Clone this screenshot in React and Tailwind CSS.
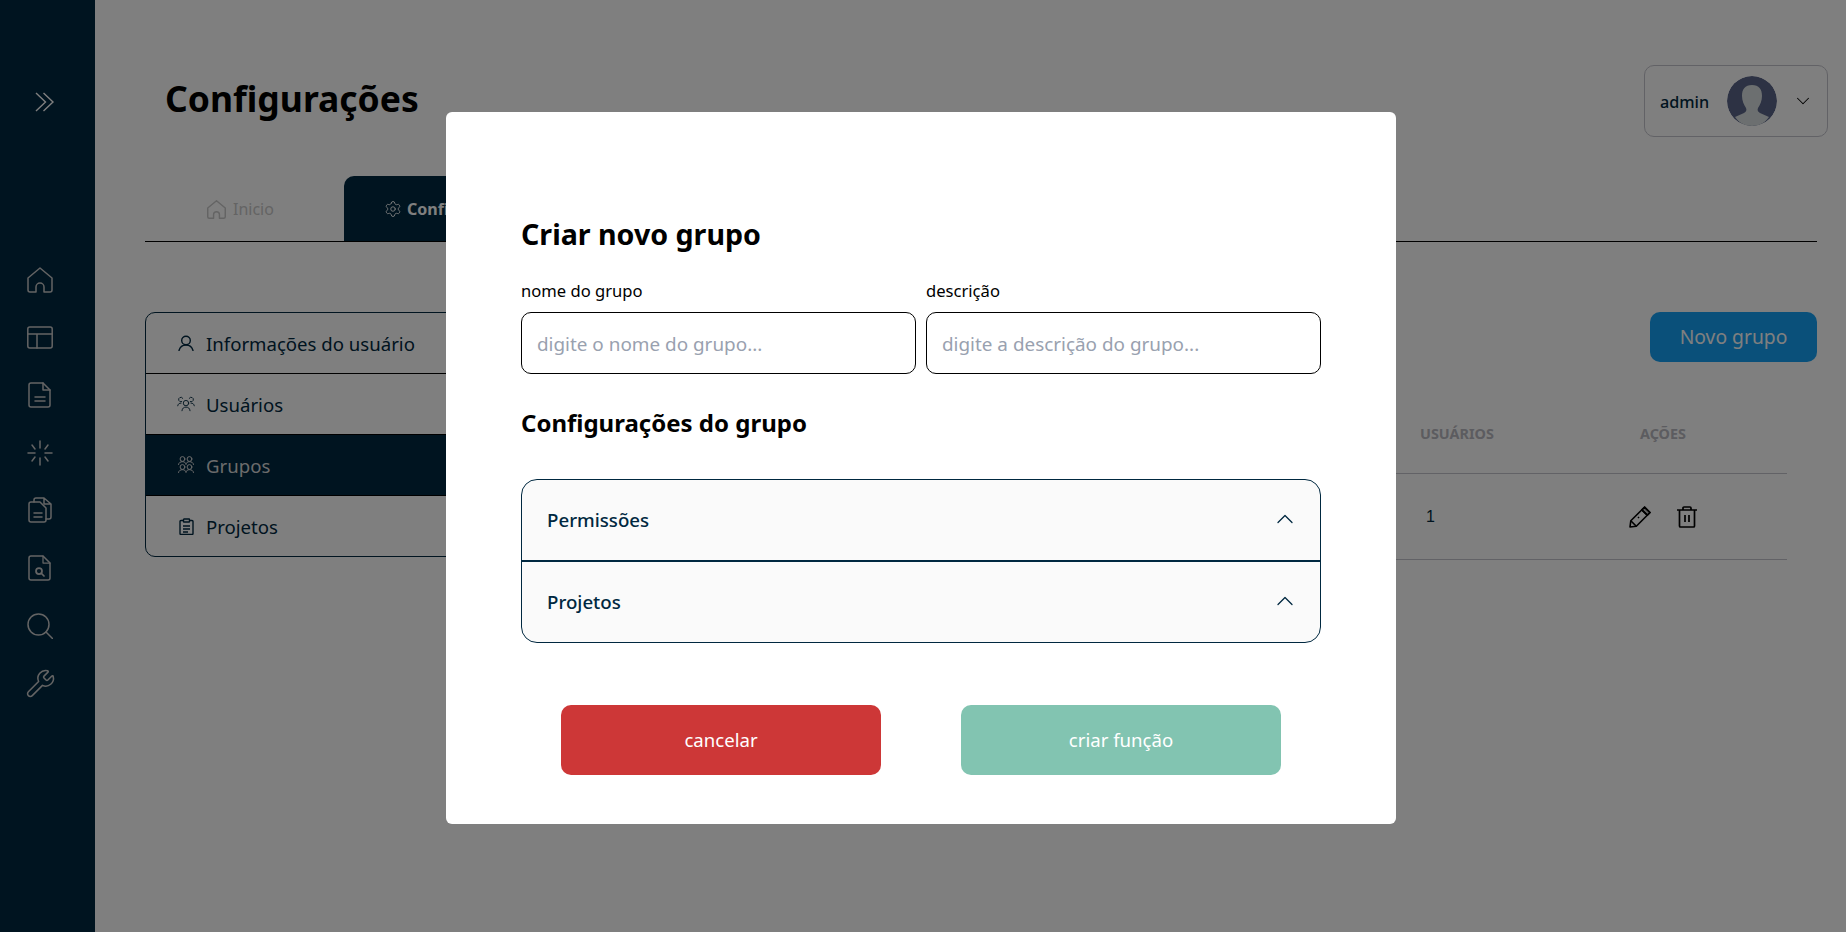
import React from "react";
import { ChevronDown, ChevronUp, Settings, Wrench } from "lucide-react";

const FONT = "font-['Noto_Sans','Open_Sans',sans-serif]";

const SideSvg = ({ children }) => (
  <svg width="26" height="26" viewBox="0 0 26 26" fill="none" stroke="currentColor" strokeWidth="1.5" strokeLinecap="round" strokeLinejoin="round">
    {children}
  </svg>
);

const HomePath = () => (
  <path d="M9 25H3a2 2 0 0 1-2-2V11L13 1l12 10v12a2 2 0 0 1-2 2h-6v-5a4 4 0 0 0-8 0z" />
);

const sideIcons = [
  <SideSvg key="home"><HomePath /></SideSvg>,
  <SideSvg key="layout">
    <rect x="0.8" y="2" width="24.4" height="21" rx="2" />
    <path d="M1 9h24M10 9v14" />
  </SideSvg>,
  <SideSvg key="file">
    <path d="M4 1h12l7 7v15a2 2 0 0 1-2 2H4a2 2 0 0 1-2-2V3a2 2 0 0 1 2-2z" />
    <path d="M16 1v7h7M8 15h10M8 19h10" />
  </SideSvg>,
  <SideSvg key="loader">
    <path d="M13 1v7M13 18v7M1 13h7M18 13h7M5 5l3 4M21 5l-3 4M5 21l3-4M21 21l-3-4" />
  </SideSvg>,
  <SideSvg key="files">
    <path d="M4 5h9l6 6v12a2 2 0 0 1-2 2H4a2 2 0 0 1-2-2V7a2 2 0 0 1 2-2z" />
    <path d="M7 5V3a2 2 0 0 1 2-2h8l7 6v13a2 2 0 0 1-2 2h-3M7 16h8M7 20h8M17 1v6h7" />
  </SideSvg>,
  <SideSvg key="file-search">
    <path d="M4 1h12l7 7v15a2 2 0 0 1-2 2H4a2 2 0 0 1-2-2V3a2 2 0 0 1 2-2z" />
    <path d="M16 1v7h7" strokeWidth="1.25" />
    <circle cx="12" cy="16" r="3" strokeWidth="1.75" />
    <path d="M14.500 18.500L17 21" strokeWidth="1.75" />
  </SideSvg>,
  <SideSvg key="search">
    <circle cx="11.500" cy="11.500" r="10.500" />
    <path d="M19 19l6.500 6.500" />
  </SideSvg>,
  <Wrench key="wrench" size={31} strokeWidth={1.2} className="-m-[2.500px]" />,
];

const UserIcon = () => (
  <svg width="16" height="16" viewBox="0 0 16 16" fill="none" stroke="currentColor" strokeWidth="1.4" strokeLinecap="round">
    <circle cx="8" cy="5.500" r="4.300" />
    <path d="M1 15.500c.8-3 3.500-5.500 7-5.500s6.200 2.500 7 5.500" />
  </svg>
);

const UsersIcon = () => (
  <svg width="20" height="16" viewBox="0 0 20 16" fill="none" stroke="currentColor" strokeWidth="1" strokeLinecap="round">
    <circle cx="10" cy="7" r="3" />
    <path d="M5.500 15.500c.4-3 2-4 4.500-4s4.100 1 4.500 4" />
    <path d="M5.200 5.400A2.500 2.500 0 1 1 6.500 1.800M.8 10c.3-2 1.500-3 3.700-3" />
    <path d="M14.800 5.400A2.500 2.500 0 1 0 13.500 1.800M19.200 10c-.3-2-1.500-3-3.700-3" />
  </svg>
);

const GroupIcon = () => (
  <svg width="16" height="18" viewBox="0 0 16 18" fill="none" stroke="currentColor" strokeWidth="1" strokeLinecap="round">
    <circle cx="4.500" cy="3" r="2.400" />
    <circle cx="11.500" cy="3" r="2.400" />
    <circle cx="4.500" cy="11" r="2.400" />
    <circle cx="11.500" cy="11" r="2.400" />
    <path d="M.5 8.500c.3-2 2-2.800 4-2.800s3.200.8 3.500 2.800c.3-2 1.500-2.800 3.500-2.800s3.700.8 4 2.800" />
    <path d="M.5 16.500c.3-2 2-2.800 4-2.800s3.200.8 3.500 2.800c.3-2 1.500-2.800 3.500-2.800s3.700.8 4 2.800" />
  </svg>
);

const ClipboardIcon = () => (
  <svg width="15" height="17" viewBox="0 0 15 17" fill="none" stroke="currentColor" strokeWidth="1.4">
    <path d="M4.500 2.500H2a1 1 0 0 0-1 1v12a1 1 0 0 0 1 1h11a1 1 0 0 0 1-1v-12a1 1 0 0 0-1-1h-2.500" />
    <rect x="4.500" y="1" width="6" height="3" rx="0.5" />
    <path d="M4 8h7M4 11h7M4 14h5" />
  </svg>
);

const PencilIcon = () => (
  <svg width="22" height="22" viewBox="0 0 22 22" fill="none" stroke="currentColor" strokeWidth="1.600" strokeLinejoin="round">
    <path d="M1 21l.8-6.200L15.500 1.200 21 6.500 7.300 20.300z" />
    <path d="M1.800 14.800l5.500 5.500M12.800 3.900l5.500 5.300M10 11l-1 1" />
    <path d="M15.500 1.200L21 6.500l-2.700 2.700-5.500-5.300z" fill="currentColor" fillOpacity="0.25" />
  </svg>
);

const TrashIcon = () => (
  <svg width="20" height="22" viewBox="0 0 20 22" fill="none" stroke="currentColor" strokeWidth="1.700">
    <path d="M0 4h20M6 4V2a1 1 0 0 1 1-1h6a1 1 0 0 1 1 1v2" />
    <path d="M2.500 4v16a1 1 0 0 0 1 1h13a1 1 0 0 0 1-1V4" />
    <path d="M8 9v7M12 9v7" />
  </svg>
);

const Avatar = () => (
  <svg width="50" height="50" viewBox="0 0 50 50" className="rounded-full">
    <circle cx="25" cy="25" r="25" fill="#5a6488" />
    <path
      d="M25 9c-7 0-10 4-10 11 0 5 2 9 4 12 1 2 0 4-2 5l-9 4c4 6 10 9 17 9s13-3 17-9l-9-4c-2-1-3-3-2-5 2-3 4-7 4-12 0-7-3-11-10-11z"
      fill="#d8dfe0"
    />
  </svg>
);

const menu = [
  { label: "Informações do usuário", icon: <UserIcon /> },
  { label: "Usuários", icon: <UsersIcon /> },
  { label: "Grupos", icon: <GroupIcon />, active: true },
  { label: "Projetos", icon: <ClipboardIcon /> },
];

const App = () => (
  <div className={`${FONT} relative flex h-[932px] w-full overflow-hidden bg-white text-black`}>
    <aside className="flex w-[95px] shrink-0 flex-col bg-[#002840] text-[#c8c8c8]">
      <svg width="20" height="20" viewBox="0 0 20 20" fill="none" stroke="#ffffff" strokeWidth="1.4" className="ml-[35px] mt-[92px]">
        <path d="M1 1l9.500 9L1 19M8.500 1l9.500 9-9.500 9" />
      </svg>
      <nav className="ml-[27px] mt-[155px] flex flex-col gap-[31.600px]">
        {sideIcons.map((icon, i) => (
          <div key={i} className="h-[26px] w-[26px]">
            {icon}
          </div>
        ))}
      </nav>
    </aside>

    <main className="min-w-0 flex-1">
      <header className="mt-[65px] flex h-[72px] items-center justify-between pl-[70px] pr-[19px]">
        <h1 className="pb-[7px] text-[35.500px] font-bold leading-[48px]">Configurações</h1>
        <div className="flex h-[72px] w-[184px] items-center rounded-[10px] border border-[#c4c4cc] pl-[15px]">
          <span className="w-[67px] pt-[2px] text-[16.200px] font-medium text-[#002840]">admin</span>
          <Avatar />
          <ChevronDown size={22} strokeWidth={1.1} className="ml-[15px]" />
        </div>
      </header>

      <div className="ml-[50px] mr-[30px] mt-[39px] flex h-[66px] border-b border-black">
        <div className="flex w-[199px] items-center gap-[7px] pl-[62px] pt-[1px] text-[16px] text-[#c8c8c8]">
          <svg width="19" height="19" viewBox="0 0 26 26" fill="none" stroke="currentColor" strokeWidth="2" strokeLinejoin="round">
            <HomePath />
          </svg>
          <span>Inicio</span>
        </div>
        <div className="flex w-[200px] items-center gap-[5px] rounded-t-[10px] bg-[#002840] pl-[40px] text-[16px] font-bold text-white">
          <Settings size={18} strokeWidth={1.2} />
          <span>Configurações</span>
        </div>
      </div>

      <section className="ml-[50px] mr-[30px] mt-[70px] flex gap-[30px]">
        <ul className="w-[360px] shrink-0 self-start overflow-hidden rounded-[10px] border border-[#002840] text-[18.600px]">
          {menu.map((item, i) => (
            <li
              key={item.label}
              className={`flex items-center gap-[11px] pl-[31px] ${i > 0 ? "h-[61px] border-t border-black" : "h-[60px]"} ${
                item.active ? "bg-[#002840] text-[#d8d8d8]" : "text-[#002840]"
              }`}
            >
              <span className="flex w-[18px] justify-center">{item.icon}</span>
              <span className="pt-[1px]">{item.label}</span>
            </li>
          ))}
        </ul>

        <div className="min-w-0 flex-1">
          <div className="flex justify-end">
            <button className="h-[50px] w-[167px] rounded-[10px] bg-[#14a0f4] pt-[1px] text-[19.300px] text-white">Novo grupo</button>
          </div>
          <div className="mr-[30px] mt-[41px]">
            <div className="grid h-[71px] grid-cols-[1fr_220px_147px] items-center border-b border-[#c4c4cc] pb-[9px] text-[14.400px] font-bold text-[#b8b8c0]">
              <span />
              <span>USUÁRIOS</span>
              <span>AÇÕES</span>
            </div>
            <div className="grid h-[86px] grid-cols-[1fr_220px_147px] items-center border-b border-[#c4c4cc] text-[16px] text-[#002840]">
              <span />
              <span className="pl-[6px] pt-[1px] font-['Liberation_Sans',sans-serif]">1</span>
              <div className="-ml-[11px] flex items-center gap-[26px] text-black">
                <PencilIcon />
                <TrashIcon />
              </div>
            </div>
          </div>
        </div>
      </section>
    </main>

    {/* fundo escuro + modal */}
    <div className="fixed inset-y-0 left-0 right-px flex justify-center bg-black/50 pr-[4px] pt-[112px]">
      <div className="h-[712px] w-[950px] rounded-[6px] bg-white px-[75px] pt-[106px]">
        <h2 className="text-[28.600px] font-bold leading-[32px]">Criar novo grupo</h2>

        <div className="mt-[29px] grid grid-cols-2 gap-[10px]">
          <label className="block">
            <span className="block text-[16.600px] leading-[24px]">nome do grupo</span>
            <input
              placeholder="digite o nome do grupo..."
              className="mt-[9px] h-[62px] w-full rounded-[10px] border border-black px-[15px] pt-[2px] text-[18.900px] placeholder:text-gray-400"
            />
          </label>
          <label className="block">
            <span className="block text-[16.600px] leading-[24px]">descrição</span>
            <input
              placeholder="digite a descrição do grupo..."
              className="mt-[9px] h-[62px] w-full rounded-[10px] border border-black px-[15px] pt-[2px] text-[18.900px] placeholder:text-gray-400"
            />
          </label>
        </div>

        <h3 className="mt-[33px] text-[24px] font-bold leading-[32px]">Configurações do grupo</h3>

        <div className="mt-[40px] overflow-hidden rounded-[16px] border border-[#002840] bg-[#fafafa] text-[18.700px] font-medium text-[#002840]">
          <div className="flex h-[82px] items-center justify-between border-b-2 border-[#002840] pl-[21px] pr-[15px]">
            <span className="pl-[4px] pt-[1px]">Permissões</span>
            <ChevronUp size={28} strokeWidth={1.1} className="mb-[3px] mr-[6px]" />
          </div>
          <div className="flex h-[80px] items-center justify-between pl-[21px] pr-[15px]">
            <span className="pl-[4px] pt-[1px]">Projetos</span>
            <ChevronUp size={28} strokeWidth={1.1} className="mb-[3px] mr-[6px]" />
          </div>
        </div>

        <div className="mt-[62px] flex justify-between px-[40px]">
          <button className="h-[70px] w-[320px] rounded-[10px] bg-[#cd3737] text-[18.600px] text-white">cancelar</button>
          <button className="h-[70px] w-[320px] rounded-[10px] bg-[#82c4b1] text-[18.600px] text-white">criar função</button>
        </div>
      </div>
    </div>
  </div>
);

export default App;
